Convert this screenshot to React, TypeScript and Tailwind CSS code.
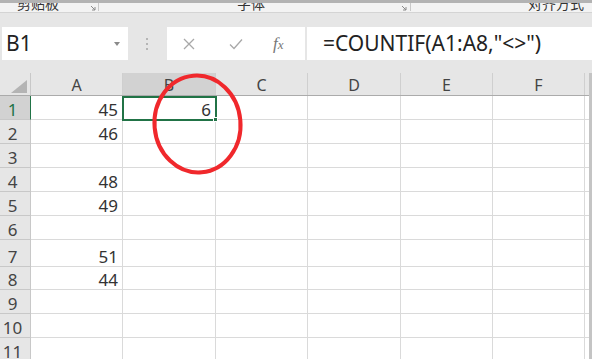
import React from "react";

const cols = ["A", "B", "C", "D", "E", "F"];
const colW = ["w-[92px]", "w-[93px]", "w-[92px]", "w-[93px]", "w-[92px]", "w-[92px]"];
const rowH = ["h-[24px]", "h-[24px]", "h-[24px]", "h-[24px]", "h-[24px]", "h-[24px]", "h-[27px]", "h-[23px]", "h-[24px]", "h-[24px]", "h-[24px]"];
const colA = ["45", "46", "", "48", "49", "", "51", "44", "", "", ""];

const font = "font-['Noto_Sans','Noto_Sans_CJK_SC',sans-serif]";

function Launcher() {
  return (
    <svg width="6" height="6" viewBox="0 0 6 6" className="mt-[2px]">
      <path d="M1 1 L5 5 M5 2 V5 H2" stroke="#8a8a8a" strokeWidth="1" fill="none" />
    </svg>
  );
}

function Ribbon() {
  return (
    <div className="h-[10px] bg-[#f3f3f3] border-b border-[#d4d4d4] flex items-start overflow-hidden text-[14px] text-[#333] leading-none">
      <span className="ml-[17px] -mt-[6px]">剪贴板</span>
      <div className="ml-[31px]"><Launcher /></div>
      <div className="ml-[2px] w-px h-[8px] bg-[#c9c9c9]" />
      <span className="ml-[138px] -mt-[6px]">字体</span>
      <div className="ml-[136px]"><Launcher /></div>
      <div className="ml-[3px] w-px h-[8px] bg-[#c9c9c9]" />
      <span className="ml-[117px] -mt-[6px]">对齐方式</span>
    </div>
  );
}

function FormulaBar() {
  return (
    <div className="h-[60px] bg-[#e6e6e6] flex items-start pt-[14px]">
      <div className="ml-[2px] w-[126px] h-[33px] bg-white flex items-center justify-between pl-[4px] pr-[8px]">
        <span className="text-[21px] leading-none text-[#222]">B1</span>
        <svg width="6" height="4" viewBox="0 0 6 4">
          <path d="M0 0 H6 L3 4 Z" fill="#8a8a8a" />
        </svg>
      </div>
      <div className="w-[39px] h-[33px] flex flex-col items-center justify-center gap-[3px] pr-[1px]">
        <div className="w-[2px] h-[2px] bg-[#b5b5b5]" />
        <div className="w-[2px] h-[2px] bg-[#b5b5b5]" />
        <div className="w-[2px] h-[2px] bg-[#b5b5b5]" />
      </div>
      <div className="w-[138px] h-[33px] bg-white flex items-center">
        <svg width="12" height="12" viewBox="0 0 12 12" className="ml-[16px]">
          <path d="M1 1 L11 11 M11 1 L1 11" stroke="#a8a8a8" strokeWidth="1.3" />
        </svg>
        <svg width="14" height="12" viewBox="0 0 14 12" className="ml-[34px]">
          <path d="M1 6.5 L5 10.5 L13 1.5" stroke="#a8a8a8" strokeWidth="1.3" fill="none" />
        </svg>
        <span className="ml-[30px] font-['Liberation_Serif',serif] italic text-[17px] text-[#777] leading-none">
          f<span className="text-[13px]">x</span>
        </span>
      </div>
      <div className="ml-[2px] flex-1 h-[33px] bg-white flex items-center pl-[16px]">
        <span className="text-[21px] leading-none text-[#222]">=COUNTIF(A1:A8,"&lt;&gt;")</span>
      </div>
    </div>
  );
}

function HeaderRow() {
  return (
    <div className="flex h-[23px] bg-[#e6e6e6] border-b border-[#ababab]">
      <div className="w-[31px] h-full border-r border-[#c8c8c8] flex items-end justify-end pr-[3px] pb-[2px]">
        <svg width="16" height="13" viewBox="0 0 16 13">
          <path d="M16 0 V13 H0 Z" fill="#b4b4b4" />
        </svg>
      </div>
      {cols.map((c, i) => (
        <div
          key={c}
          className={`${colW[i]} h-full border-r border-[#cfcfcf] flex items-end justify-center pb-[2px] text-[16px] leading-none text-[#444] ${
            c === "B" ? "bg-[#d2d2d2]" : ""
          }`}
        >
          {c}
        </div>
      ))}
      <div className="flex-1" />
    </div>
  );
}

function Rows() {
  return (
    <div className="flex flex-col">
      {rowH.map((h, r) => (
        <div key={r} className={`flex ${h}`}>
          <div
            className={`w-[31px] h-full border-b border-r flex items-end justify-center pr-[5px] pb-[1px] text-[17px] leading-none ${
              r === 0
                ? "bg-[#d2d2d2] text-[#217346] border-r-[#217346] border-b-[#c8c8c8]"
                : "bg-[#e6e6e6] text-[#444] border-[#c8c8c8]"
            }`}
          >
            {r + 1}
          </div>
          {cols.map((c, i) => (
            <div
              key={c}
              className={`${colW[i]} h-full border-r border-b border-[#dadada] flex items-end justify-end pr-[4px] pb-[1px] text-[17px] leading-none text-[#333]`}
            >
              {c === "A" ? colA[r] : c === "B" && r === 0 ? "6" : ""}
            </div>
          ))}
          <div className="flex-1 h-full border-b border-[#dadada]" />
        </div>
      ))}
    </div>
  );
}

export default function App() {
  return (
    <div className={`w-[592px] h-[359px] overflow-hidden bg-white relative ${font}`}>
      <div className="h-[3px] bg-[#b3b3b3]" />
      <Ribbon />
      <FormulaBar />
      <HeaderRow />
      <Rows />
      {/* selected cell */}
      <div className="absolute left-[122px] top-[96px] w-[95px] h-[25px] border-2 border-[#217346] pointer-events-none" />
      <div className="absolute left-[213px] top-[117px] w-[5px] h-[5px] bg-[#217346] border border-white" />
      {/* right frame */}
      <div className="absolute right-0 top-[73px] w-[3px] h-[286px] bg-[#c4c4c4]" />
      {/* red marker */}
      <svg className="absolute left-0 top-0 pointer-events-none" width="592" height="359">
        <ellipse cx="197.5" cy="124" rx="43" ry="48.5" fill="none" stroke="#f0282c" strokeWidth="4" transform="rotate(-5 197.5 124)" />
      </svg>
    </div>
  );
}
